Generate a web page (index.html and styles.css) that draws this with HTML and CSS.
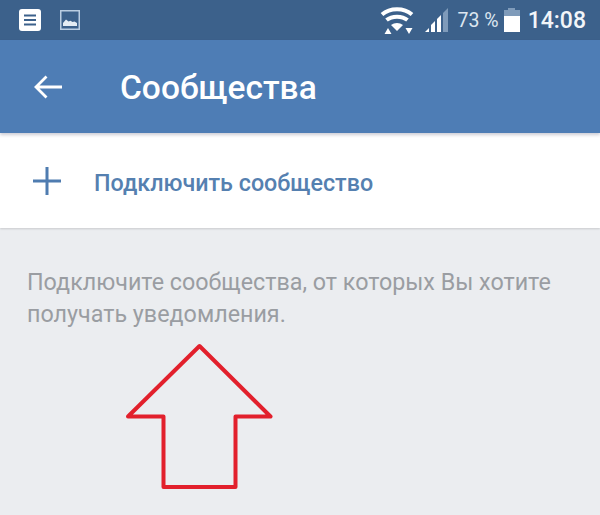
FILE: index.html
```html
<!DOCTYPE html>
<html lang="ru">

<head>
    <meta charset="UTF-8">
    <meta name="viewport" content="width=device-width, initial-scale=1.0">
    <title>Сообщества</title>
    <link rel="stylesheet" href="styles.css">
</head>

<body>
    <div class="statusbar">
        <div class="status-left">
            <svg class="icon-notes" width="22" height="22" viewBox="0 0 22 22">
                <rect width="22" height="22" rx="3" fill="#fff" />
                <path d="M5 6.500h12M5 11h12M5 15.500h12" stroke="#3c618b" stroke-width="2" />
            </svg>
            <svg class="icon-photo" width="20" height="20" viewBox="0 0 20 20">
                <rect x=".75" y=".75" width="18.500" height="18.500" fill="none" stroke="#b9cde2" stroke-width="1.500" />
                <path d="M3 16v-3l3-3.500 2.500 2 2-.8 2 1.300 2-.5 2.500 1.500V16z" fill="#e4ecf4" />
            </svg>
        </div>
        <div class="status-right">
            <svg class="icon-wifi" width="34" height="30" viewBox="0 0 34 30">
                <path d="M2 9.500C10 2.500 24 2.500 32 9.500" fill="none" stroke="#fff" stroke-width="4" />
                <path d="M6.500 15C12 10.500 22 10.500 27.500 15" fill="none" stroke="#fff" stroke-width="4" />
                <path d="M11 20C14.500 17.300 19.500 17.300 23 20L17 26z" fill="#fff" />
                <path d="M4.500 29l3.500-6 3.500 6zM25.500 23h7l-3.500 6z" fill="#fff" />
            </svg>
            <svg class="icon-signal" width="26" height="26" viewBox="0 0 26 26">
                <path d="M1 25l4-4v4zM7 25v-7l4-4v11zM13 25V12l4-4v17z" fill="#fff" />
                <path d="M19 25V6l5-5v24z" fill="#7f9bba" />
            </svg>
            <span class="battery-text">73 %</span>
            <div class="battery">
                <div class="battery-cap"></div>
                <div class="battery-body">
                    <div class="battery-level"></div>
                </div>
            </div>
            <span class="clock">14:08</span>
        </div>
    </div>

    <div class="appbar">
        <svg class="icon-back" width="30" height="26" viewBox="0 0 30 26">
            <path d="M29 13H3M13.500 2.500L3 13l10.500 10.500" fill="none" stroke="#fff" stroke-width="2.800" />
        </svg>
        <h1 class="title">Сообщества</h1>
    </div>

    <div class="connect-row">
        <svg class="icon-plus" width="30" height="30" viewBox="0 0 30 30">
            <path d="M15 1v28M1 15h28" fill="none" stroke="#4f7cb0" stroke-width="3" />
        </svg>
        <span class="connect-label">Подключить сообщество</span>
    </div>

    <p class="hint">Подключите сообщества, от которых Вы хотите получать уведомления.</p>

    <svg class="red-arrow" width="600" height="515" viewBox="0 0 600 515">
        <path d="M199.500 346L270.500 416.500H235.500V487H163.500V416.500H128z" fill="none" stroke="#e2202c" stroke-width="4" stroke-linejoin="round" />
    </svg>
</body>

</html>
```

FILE: styles.css
```css
* {
    box-sizing: border-box;
    margin: 0;
    padding: 0;
}

html,
body {
    height: 100%;
    overflow: hidden;
}

body {
    position: relative;
    background: #ebedf0;
    font-family: Roboto, "Noto Sans", sans-serif;
}

.statusbar {
    display: flex;
    justify-content: space-between;
    align-items: center;
    height: 40px;
    padding: 0 14px 0 19px;
    background: #3c618b;
    color: #fff;
}

.status-left {
    display: flex;
    align-items: center;
    gap: 19px;
}

.status-right {
    display: flex;
    align-items: center;
}

.icon-wifi {
    margin-right: 10px;
}

.icon-signal {
    margin-right: 8px;
}

.battery-text {
    font-size: 19.500px;
    color: #dde6f0;
    margin-right: 5px;
}

.battery {
    display: flex;
    flex-direction: column;
    align-items: center;
    width: 16px;
    margin-right: 8px;
}

.battery-cap {
    width: 7px;
    height: 2px;
    background: #7f9bba;
}

.battery-body {
    display: flex;
    align-items: flex-end;
    width: 16px;
    height: 22px;
    background: #7f9bba;
}

.battery-level {
    width: 100%;
    height: 16px;
    background: #fff;
}

.clock {
    font-size: 23px;
    font-weight: 500;
    color: #f2f5f9;
}

.appbar {
    display: flex;
    align-items: center;
    height: 93px;
    padding-left: 33px;
    background: #4e7db5;
    box-shadow: 0 2px 3px rgba(60, 60, 90, 0.25);
    position: relative;
}

.title {
    margin-left: 57px;
    padding-top: 2px;
    font-size: 33.500px;
    font-weight: 500;
    color: #fff;
}

.connect-row {
    display: flex;
    align-items: center;
    height: 95px;
    padding-left: 32px;
    background: #fff;
    box-shadow: 0 1px 2px rgba(0, 0, 0, 0.15);
}

.connect-label {
    margin-left: 32px;
    padding-top: 4px;
    font-size: 23.300px;
    font-weight: 500;
    color: #5580b0;
}

.hint {
    padding: 38px 27px 0;
    font-size: 23.300px;
    line-height: 32px;
    color: #9a9da2;
}

.red-arrow {
    position: absolute;
    top: 0;
    left: 0;
    pointer-events: none;
}
```
